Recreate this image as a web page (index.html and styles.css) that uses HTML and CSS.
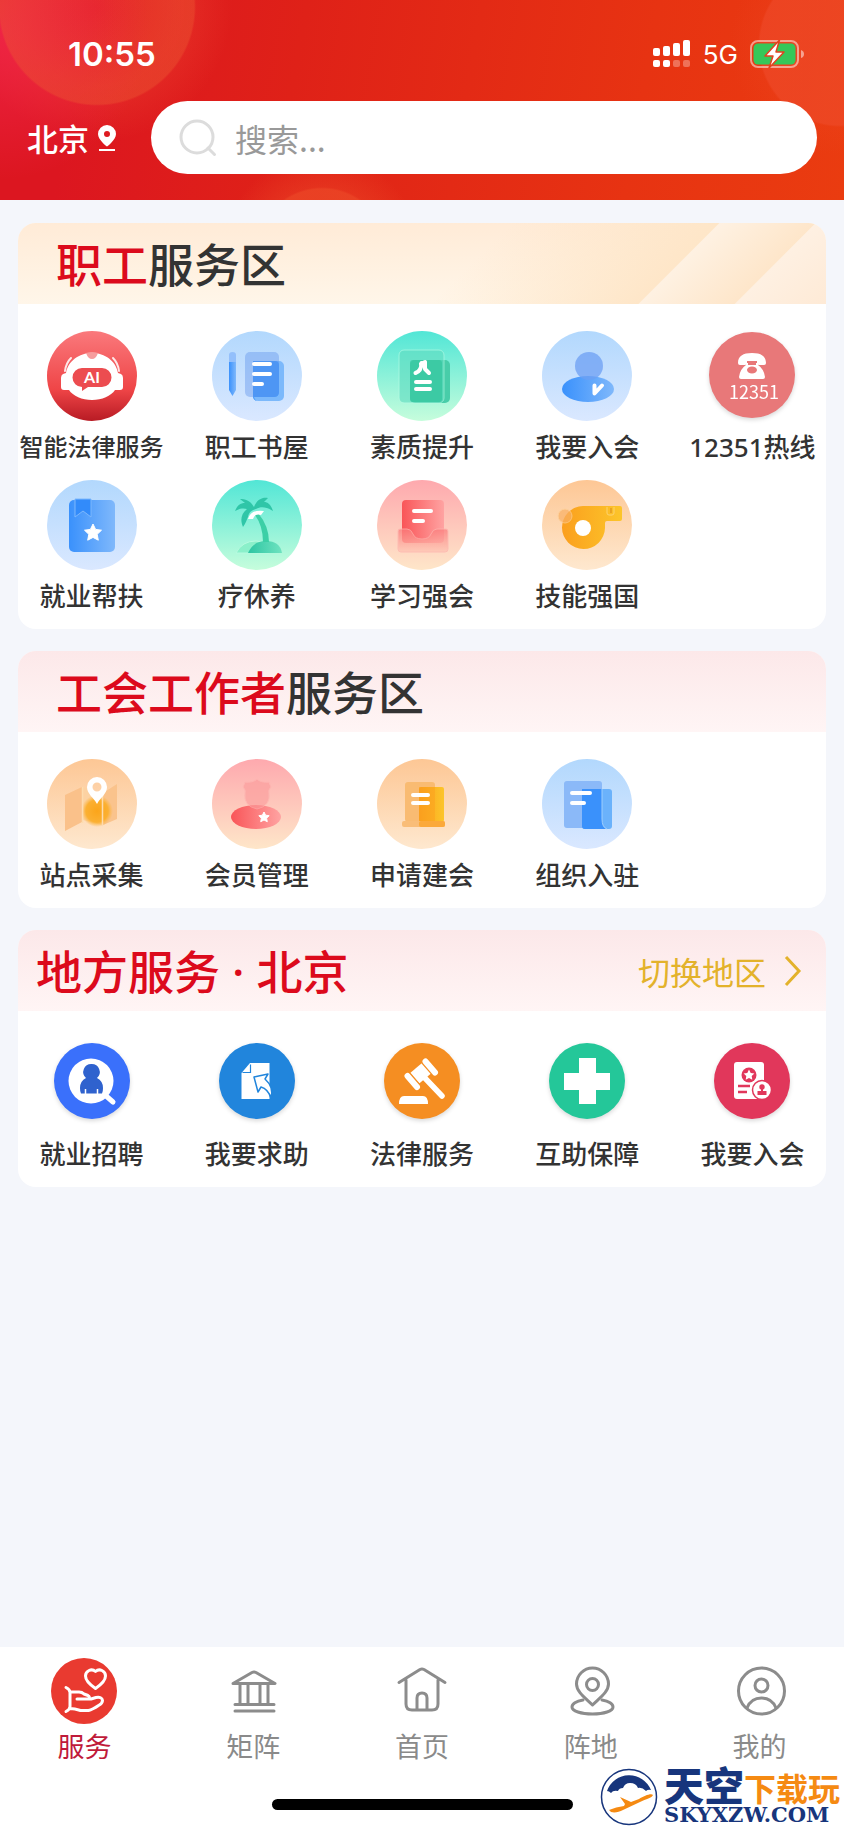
FILE: index.html
```
<!DOCTYPE html>
<html lang="zh-CN">
<head>
    <meta charset="UTF-8">
    <meta name="viewport" content="width=device-width, initial-scale=1.0">
    <title>服务</title>
    <link rel="stylesheet" href="styles.css">
</head>
<body>
    <!-- Shared gradients for the icons -->
    <svg class="defs" aria-hidden="true">
        <defs>
            <linearGradient id="bgBlue" x1="0" y1="0" x2="0" y2="1"><stop offset="0" stop-color="#b2d8fd"/><stop offset="1" stop-color="#dae8ff"/></linearGradient>
            <linearGradient id="bgGreen" x1="0" y1="0" x2="0" y2="1"><stop offset="0" stop-color="#52e6d6"/><stop offset="1" stop-color="#c6fddc"/></linearGradient>
            <linearGradient id="bgPink" x1="0" y1="0" x2="0" y2="1"><stop offset="0" stop-color="#fea9ae"/><stop offset="1" stop-color="#fee6c9"/></linearGradient>
            <linearGradient id="bgOrange" x1="0" y1="0" x2="0" y2="1"><stop offset="0" stop-color="#fdc795"/><stop offset="1" stop-color="#fee8cf"/></linearGradient>
            <linearGradient id="bgRed" x1="0" y1="0" x2="0" y2="1"><stop offset="0" stop-color="#fa797c"/><stop offset=".65" stop-color="#ef4547"/><stop offset="1" stop-color="#b81b24"/></linearGradient>
            <linearGradient id="blue"><stop offset="0" stop-color="#3a91fc"/><stop offset="1" stop-color="#7fb8fb"/></linearGradient>
            <linearGradient id="green"><stop offset="0" stop-color="#2cc5a2"/><stop offset="1" stop-color="#6fe3c0"/></linearGradient>
            <linearGradient id="red"><stop offset="0" stop-color="#f95558"/><stop offset="1" stop-color="#ffa3a2"/></linearGradient>
            <linearGradient id="orange"><stop offset="0" stop-color="#fb9f1e"/><stop offset="1" stop-color="#fcc52a"/></linearGradient>
            <linearGradient id="tray" x1="0" y1="0" x2="0" y2="1"><stop offset="0" stop-color="#fb7c7c"/><stop offset="1" stop-color="#fec5b4"/></linearGradient>
            <radialGradient id="glow"><stop offset="0" stop-color="#fba51a"/><stop offset=".7" stop-color="#fbb032"/><stop offset="1" stop-color="#fbb84a" stop-opacity="0"/></radialGradient>
        </defs>
    </svg>

    <header class="header">
        <div class="status-bar">
            <span class="time">10:55</span>
            <div class="status-icons">
                <svg class="signal" viewBox="0 0 38 28" fill="#fff">
                    <rect x="0" y="8" width="7" height="8" rx="2"/><rect x="10" y="6" width="7" height="10" rx="2"/><rect x="20" y="3" width="7" height="13" rx="2"/><rect x="30" y="0" width="7" height="16" rx="2"/>
                    <rect x="0" y="20" width="7" height="7" rx="2"/><rect x="10" y="20" width="7" height="7" rx="2"/><rect x="20" y="20" width="7" height="7" rx="2" opacity=".3"/><rect x="30" y="20" width="7" height="7" rx="2" opacity=".3"/>
                </svg>
                <span class="network">5G</span>
                <svg class="battery" viewBox="0 0 54 28">
                    <rect x="1" y="1" width="47" height="26" rx="7" fill="none" stroke="#fff" stroke-opacity=".5" stroke-width="2"/>
                    <path d="M51 10q3 1 3 4t-3 4z" fill="#fff" opacity=".5"/>
                    <rect x="3.500" y="3.500" width="42" height="21" rx="4.500" fill="#35c759"/>
                    <path d="M29.500 0L15 16H23L19 28L34 12H26z" fill="#fff" stroke="#e3421f" stroke-width="1.500" stroke-linejoin="round"/>
                </svg>
            </div>
        </div>
        <div class="search-row">
            <button type="button" class="city">北京
                <svg class="city-pin" viewBox="0 0 20 28" fill="#fff"><path fill-rule="evenodd" d="M10 1a9 9 0 0 1 9 9c0 6-9 12.500-9 12.500S1 16 1 10a9 9 0 0 1 9-9zm0 6a3 3 0 1 0 0 6 3 3 0 0 0 0-6z"/><rect x="2" y="25" width="16" height="2"/></svg>
            </button>
            <label class="search-box">
                <svg class="search-icon" viewBox="0 0 38 38" fill="none" stroke="#dcdcdc" stroke-width="3" stroke-linecap="round"><circle cx="18" cy="18" r="16"/><path d="M29 29l6.500 6.500"/></svg>
                <input type="search" class="search-input" placeholder="搜索..." aria-label="搜索">
            </label>
        </div>
    </header>

    <main class="content">
        <section class="card">
            <div class="card-header warm">
                <h2><em>职工</em>服务区</h2>
            </div>
            <div class="grid">
                <a class="item" href="#">
                    <svg class="icon" viewBox="0 0 90 90">
                        <circle cx="45" cy="45" r="45" fill="url(#bgRed)"/>
                        <path d="M19 42C21 30 32 22 45 22s24 8 26 20l3 1q2 1 2 4v9q0 3-3 3h-5c-4 6-13 10-23 10s-19-4-23-10h-5q-3 0-3-3v-9q0-3 2-4z" fill="#fff"/>
                        <path d="M24 27q-5 5-6 13M66 27q5 5 6 13" fill="none" stroke="#fff" stroke-width="2" stroke-linecap="round" opacity=".85"/>
                        <path d="M39 22q6-2 12 0q-2 6-6 6t-6-6z" fill="#f69c9d"/>
                        <path d="M35 37h20a9.500 9.500 0 0 1 0 19H41l-6 4v-4a9.500 9.500 0 0 1 0-19z" fill="#ec4c50"/>
                        <text x="45" y="52" text-anchor="middle" class="ai-text">AI</text>
                    </svg>
                    <span class="label small">智能法律服务</span>
                </a>
                <a class="item" href="#">
                    <svg class="icon" viewBox="0 0 90 90">
                        <circle cx="45" cy="45" r="45" fill="url(#bgBlue)"/>
                        <path d="M17 31v-7q0-3 3.500-3t3.500 3v7z" fill="#93bffb"/>
                        <path d="M17 31h7v28l-3.500 6-3.500-6z" fill="url(#blue)"/>
                        <rect x="41" y="30" width="31" height="40" rx="5" fill="#7cb9fb"/>
                        <path d="M41 30h22q4 0 4 4v27q0 5-5 5H42q1 4 4 4-5 0-5-5z" fill="#459afb"/>
                        <rect x="33" y="21" width="34" height="45" rx="5" fill="#5c92ea" opacity=".4"/>
                        <path d="M42 33h16M42 43h16M42 53h8" stroke="#fff" stroke-width="4" stroke-linecap="round"/>
                    </svg>
                    <span class="label">职工书屋</span>
                </a>
                <a class="item" href="#">
                    <svg class="icon" viewBox="0 0 90 90">
                        <circle cx="45" cy="45" r="45" fill="url(#bgGreen)"/>
                        <rect x="33" y="29" width="40" height="43" rx="5" fill="#48cda9"/>
                        <rect x="22" y="19" width="45" height="53" rx="5" fill="#5fdcc0" opacity=".6" stroke="#b7fbe4" stroke-width="1"/>
                        <rect x="33" y="29" width="32" height="42" rx="3" fill="#2fc39b" opacity=".65"/>
                        <path d="M38.500 42q6-2 6-10" fill="none" stroke="#fff" stroke-width="4" stroke-linecap="round"/>
                        <path d="M44 33l4-2v7l4 4" fill="none" stroke="#fff" stroke-width="4" stroke-linecap="round" stroke-linejoin="round"/>
                        <path d="M39 51h14M39 58h14" stroke="#fff" stroke-width="4" stroke-linecap="round"/>
                    </svg>
                    <span class="label">素质提升</span>
                </a>
                <a class="item" href="#">
                    <svg class="icon" viewBox="0 0 90 90">
                        <circle cx="45" cy="45" r="45" fill="url(#bgBlue)"/>
                        <ellipse cx="46" cy="58" rx="26" ry="13" fill="url(#blue)"/>
                        <circle cx="47" cy="35" r="14" fill="#6c9ff3" opacity=".75"/>
                        <path d="M52.500 54.500v8l7.500-8" fill="none" stroke="#fff" stroke-width="4" stroke-linecap="round" stroke-linejoin="round"/>
                    </svg>
                    <span class="label">我要入会</span>
                </a>
                <a class="item" href="#">
                    <svg class="icon shadow" viewBox="0 0 90 90">
                        <circle cx="45" cy="44" r="43" fill="#e87879"/>
                        <path d="M31 32c0-7 5-10 14-10s14 3 14 10q0 2-2 2h-5q-2 0-2-2v-2H40v2q0 2-2 2h-5q-2 0-2-2z" fill="#fff"/>
                        <path fill-rule="evenodd" d="M41 32v2h8v-2h2v2q6 4 7 12 0 2-2 2H34q-2 0-2-2 1-8 7-12v-2zm4 3.500a5 3.500 0 1 0 0 7 5 3.500 0 0 0 0-7z" fill="#fff"/>
                        <text x="47" y="68" text-anchor="middle" class="tel-text">12351</text>
                    </svg>
                    <span class="label">12351热线</span>
                </a>
                <a class="item" href="#">
                    <svg class="icon" viewBox="0 0 90 90">
                        <circle cx="45" cy="45" r="45" fill="url(#bgBlue)"/>
                        <rect x="22" y="20" width="46" height="52" rx="5" fill="url(#blue)"/>
                        <path d="M28 19h16v18l-8-6-8 6z" fill="#328bfa" stroke="#7db8fd" stroke-width="1"/>
                        <path d="M46 44l2.600 5.400 5.900.8-4.300 4.100 1.100 5.900-5.300-2.800-5.300 2.800 1.100-5.900-4.300-4.100 5.900-.8z" fill="#fff" stroke="#fff" stroke-linejoin="round"/>
                    </svg>
                    <span class="label">就业帮扶</span>
                </a>
                <a class="item" href="#">
                    <svg class="icon" viewBox="0 0 90 90">
                        <circle cx="45" cy="45" r="45" fill="url(#bgGreen)"/>
                        <path d="M24 73q6-12 20-12 10 0 13 12z" fill="#8af0ca" stroke="#b7fbe0" stroke-width="1"/>
                        <path d="M36 73q5-12 18-12 14 0 16 12z" fill="url(#green)"/>
                        <path d="M43 35q8 11 8 27h6q0-16-11-29z" fill="#3ccfa6"/>
                        <path d="M36 39q3-10 16-8l-3 4q-6-2-8 4z" fill="#fff"/>
                        <path d="M42 27c-4-7-9-8-14-8l5 4c-5 0-8 3-10 8 5-3 9-3 12-2-6 5-7 11-4 18 3-4 4-8 5-10 1-5 4-7 8-8 5-3 11-2 17 2-2-6-5-9-9-9l4-4c-5-1-11 1-14 9z" fill="#2fc6a8"/>
                    </svg>
                    <span class="label">疗休养</span>
                </a>
                <a class="item" href="#">
                    <svg class="icon" viewBox="0 0 90 90">
                        <circle cx="45" cy="45" r="45" fill="url(#bgPink)"/>
                        <rect x="25" y="20" width="42" height="43" rx="4" fill="url(#red)"/>
                        <path d="M21 51q0-2 2-2h7q4 0 6 5t9 5 9-5 6-5h9q2 0 2 2v18q0 3-3 3H24q-3 0-3-3z" fill="url(#tray)" opacity=".75" stroke="#fdb3ad" stroke-width="1"/>
                        <path d="M37 31h17M37 41h9" stroke="#fff" stroke-width="4" stroke-linecap="round"/>
                    </svg>
                    <span class="label">学习强会</span>
                </a>
                <a class="item" href="#">
                    <svg class="icon" viewBox="0 0 90 90">
                        <circle cx="45" cy="45" r="45" fill="url(#bgOrange)"/>
                        <path d="M41 26h37q2 0 2 2v11q0 2-2 2H65q-2 0-2 2v5a21.500 21.500 0 1 1-22-22z" fill="url(#orange)"/>
                        <circle cx="23" cy="36" r="7" fill="#f9b064" opacity=".7" stroke="#fdcf97" stroke-width="1"/>
                        <path d="M65 27v6q0 2 2 2h3q2 0 2-2v-6" fill="none" stroke="#fdd36f" stroke-width="1"/>
                        <path d="M69 28v5" stroke="#e39a22" stroke-width="1.500"/>
                        <circle cx="41" cy="48" r="8" fill="#fff"/>
                    </svg>
                    <span class="label">技能强国</span>
                </a>
            </div>
        </section>

        <section class="card">
            <div class="card-header">
                <h2><em>工会工作者</em>服务区</h2>
            </div>
            <div class="grid">
                <a class="item" href="#">
                    <svg class="icon" viewBox="0 0 90 90">
                        <circle cx="45" cy="45" r="45" fill="url(#bgOrange)"/>
                        <path d="M18 36l17-8v35l-17 9z" fill="#fac18a"/>
                        <path d="M36 28l19 7v31l-19-5z" fill="#fcd2a2"/>
                        <path d="M56 34l14-9v35l-14 6z" fill="#fac38c"/>
                        <circle cx="50" cy="52" r="16" fill="url(#glow)"/>
                        <path d="M35.500 28v36M55.500 32v34" stroke="#fddcae" stroke-width="1.500"/>
                        <path fill-rule="evenodd" d="M50 18a10 10 0 0 1 10 10c0 7-7 11-10 17-3-6-10-10-10-17a10 10 0 0 1 10-10zm0 5.500a4.500 4.500 0 1 0 0 9 4.500 4.500 0 0 0 0-9z" fill="#fff"/>
                    </svg>
                    <span class="label">站点采集</span>
                </a>
                <a class="item" href="#">
                    <svg class="icon" viewBox="0 0 90 90">
                        <circle cx="45" cy="45" r="45" fill="url(#bgPink)"/>
                        <ellipse cx="44" cy="58" rx="25" ry="12" fill="url(#red)"/>
                        <path d="M45 20q4 4 12 3 1 3 2 5-3 3-2 6 2 13-12 16-14-3-12-16 1-3-2-6 1-2 2-5 8 1 12-3z" fill="#fb9a9a" opacity=".6" stroke="#fdb1ae" stroke-width="1"/>
                        <path d="M52 53l1.600 3.200 3.600.5-2.600 2.500.7 3.500-3.300-1.700-3.300 1.700.7-3.500-2.600-2.500 3.600-.5z" fill="#fff" stroke="#fff" stroke-linejoin="round"/>
                    </svg>
                    <span class="label">会员管理</span>
                </a>
                <a class="item" href="#">
                    <svg class="icon" viewBox="0 0 90 90">
                        <circle cx="45" cy="45" r="45" fill="url(#bgOrange)"/>
                        <rect x="28" y="23" width="30" height="40" rx="3" fill="#f9bb72"/>
                        <rect x="42" y="28" width="25" height="35" rx="2" fill="url(#orange)"/>
                        <path d="M42 28h16v34H42z" fill="#fb9f1e" opacity=".5"/>
                        <rect x="25" y="62" width="43" height="6" rx="2" fill="#f9bd78"/>
                        <rect x="42" y="62" width="26" height="6" rx="2" fill="#fba93a"/>
                        <path d="M36 36h15M36 44h15" stroke="#fff" stroke-width="4" stroke-linecap="round"/>
                    </svg>
                    <span class="label">申请建会</span>
                </a>
                <a class="item" href="#">
                    <svg class="icon" viewBox="0 0 90 90">
                        <circle cx="45" cy="45" r="45" fill="url(#bgBlue)"/>
                        <rect x="22" y="22" width="38" height="47" rx="3" fill="#8bb9f8"/>
                        <rect x="40" y="30" width="30" height="40" rx="3" fill="#6bb2fb"/>
                        <path d="M40 30h20v31q0 7 4 9H43q-3 0-3-3z" fill="#3a91fb"/>
                        <path d="M60 30v30q0 8 5 10" fill="none" stroke="#9dcdfd" stroke-width="1"/>
                        <path d="M30 34h18M30 44h12" stroke="#fff" stroke-width="4" stroke-linecap="round"/>
                    </svg>
                    <span class="label">组织入驻</span>
                </a>
            </div>
        </section>

        <section class="card">
            <div class="card-header local">
                <h2><em>地方服务 · 北京</em></h2>
                <a class="switch" href="#">切换地区
                    <svg class="chevron" viewBox="0 0 18 32" fill="none" stroke="#e3b22b" stroke-width="3"><path d="M2 2l13 14L2 30"/></svg>
                </a>
            </div>
            <div class="grid">
                <a class="item" href="#">
                    <svg class="icon shadow" viewBox="0 2 90 90">
                        <circle cx="45" cy="45" r="38" fill="#3a70fb"/>
                        <path d="M58 59l8 7" stroke="#fff" stroke-width="5" stroke-linecap="round"/>
                        <circle cx="44" cy="45" r="22.500" fill="#fff"/>
                        <path d="M44.500 28a8 8 0 0 1 5.500 14q6 3 6 10 0 4-1 5.500H34q-1-1.500-1-5.500 0-7 6-10a8 8 0 0 1 5.500-14z" fill="#2f62ce"/>
                        <path d="M38.500 53v5M50.500 53v5" stroke="#fff" stroke-width="1.500"/>
                    </svg>
                    <span class="label">就业招聘</span>
                </a>
                <a class="item" href="#">
                    <svg class="icon shadow" viewBox="0 2 90 90">
                        <circle cx="45" cy="45" r="38" fill="#2185dc"/>
                        <path d="M38 27h19.500v36h-28V37z" fill="#fff"/>
                        <path d="M30.500 36.500h8v-8" fill="none" stroke="#2185dc" stroke-width="1.200"/>
                        <path d="M42 41l14-3-3 5q9 8 6 19-3-9-10-11l-3 5z" fill="#fff" stroke="#2185dc" stroke-width="1.500" stroke-linejoin="round"/>
                    </svg>
                    <span class="label">我要求助</span>
                </a>
                <a class="item" href="#">
                    <svg class="icon shadow" viewBox="0 2 90 90">
                        <circle cx="45" cy="45" r="38" fill="#f58e22"/>
                        <path d="M22 68q0-8 5-8h19q5 0 5 8z" fill="#fff"/>
                        <path d="M46 40l19 20" stroke="#fff" stroke-width="5.500" stroke-linecap="round"/>
                        <path d="M38 42l13-11" stroke="#fff" stroke-width="14"/>
                        <path d="M30.500 40l10 11.500M48 25.500l10 11.500" stroke="#f58e22" stroke-width="8" stroke-linecap="round"/>
                        <path d="M30.500 40l9.500 11M48.500 25.500l9.500 11" stroke="#fff" stroke-width="6" stroke-linecap="round"/>
                    </svg>
                    <span class="label">法律服务</span>
                </a>
                <a class="item" href="#">
                    <svg class="icon shadow" viewBox="0 2 90 90">
                        <circle cx="45" cy="45" r="38" fill="#24c799"/>
                        <path d="M37 22h17v15h14v17H54v14H37V54H22V37h15z" fill="#fff"/>
                    </svg>
                    <span class="label">互助保障</span>
                </a>
                <a class="item" href="#">
                    <svg class="icon shadow" viewBox="0 2 90 90">
                        <circle cx="45" cy="45" r="38" fill="#e1375b"/>
                        <rect x="27" y="26" width="30" height="37" rx="3" fill="#fff"/>
                        <circle cx="42" cy="39" r="7.500" fill="#e1375b"/>
                        <path d="M42 33.500l1.700 3.400 3.700.5-2.700 2.700.6 3.700-3.300-1.800-3.300 1.800.6-3.700-2.700-2.700 3.700-.5z" fill="#fff"/>
                        <path d="M31 50h12M31 56h9" stroke="#e1375b" stroke-width="2.500"/>
                        <circle cx="55" cy="54" r="9.500" fill="#fff" stroke="#e1375b" stroke-width="1.500"/>
                        <circle cx="55" cy="51" r="2.700" fill="#e1375b"/>
                        <path d="M54 52h2v3h3.500v4h-9v-4H54z" fill="#e1375b"/>
                    </svg>
                    <span class="label">我要入会</span>
                </a>
            </div>
        </section>
    </main>

    <footer class="tab-bar">
        <nav class="tabs">
            <a class="tab active" href="#">
                <svg class="tab-icon" viewBox="0 0 66 66">
                    <circle cx="33" cy="33" r="33" fill="#e93a30"/>
                    <g fill="none" stroke="#fff" stroke-width="3" stroke-linecap="round" stroke-linejoin="round">
                        <path d="M44.500 30.500C38 26 34.500 22 34.500 18a6 6 0 0 1 10-4.500A6 6 0 0 1 54.500 18c0 4-3.500 8-10 12.500z"/>
                        <path d="M15 29.500q4 2 4 5v14q0 3-4 5M19 34h9q3 0 5 2l4 1.500q2 1 1 3.500M26 41h14l5-1.500q6-1 6.500 3 0 3-4 5-6 4-10 5h-8q-6-2-10.500-2"/>
                    </g>
                </svg>
                <span>服务</span>
            </a>
            <a class="tab" href="#">
                <svg class="tab-icon line" viewBox="0 0 66 66"><path d="M13 25.500l19-11q2-1 4 0l19 11zM20 26v20M28 26v20M40 26v20M48 26v20M15 46.500h39M15 53h39"/></svg>
                <span>矩阵</span>
            </a>
            <a class="tab" href="#">
                <svg class="tab-icon line" viewBox="0 0 66 66"><path d="M10 24.500L31 11.500q2-1 4 0L56 24.500M17 22v24q0 6 6 6h20q6 0 6-6V22M28 52V40q0-5 5-5t5 5v12"/></svg>
                <span>首页</span>
            </a>
            <a class="tab" href="#">
                <svg class="tab-icon line" viewBox="0 0 66 66"><path d="M34.500 47c-7-7-16-13-16-21a16 16 0 0 1 32 0c0 8-9 14-16 21z"/><circle cx="34.500" cy="26.500" r="6"/><path d="M25 42c-7 1-11 4-11 7 0 4 9 7 20.500 7S55 53 55 49c0-3-4-6-11-7"/></svg>
                <span>阵地</span>
            </a>
            <a class="tab" href="#">
                <svg class="tab-icon line" viewBox="0 0 66 66"><circle cx="34.500" cy="33" r="23"/><circle cx="34.500" cy="27.500" r="6.500"/><path d="M20 50q4-10 14.500-10T49 50"/></svg>
                <span>我的</span>
            </a>
        </nav>
        <div class="home-indicator"></div>
        <div class="watermark">
            <svg class="watermark-logo" viewBox="0 0 58 58">
                <circle cx="29" cy="29" r="27.500" fill="#fff" stroke="#17357c" stroke-width="1.500"/>
                <path d="M7 23a23.500 23.500 0 0 1 44-1q-3-1-5 1-4-4-8-3-2-5-8-5-5 0-7 5-4 0-5 3-5-1-7 2-2-2-4-2z" fill="#17357c"/>
                <path d="M9 42l2 2c4 1 8 0 12-2l17-8c6-3 12-4 13-7-2-2-9 1-14 4L31 34l-11-5 5 7-1 2q-8 1-15 4z" fill="#f58a12"/>
            </svg>
            <div class="watermark-text">
                <div class="watermark-name">天空<span>下载玩</span></div>
                <div class="watermark-url">SKYXZW.COM</div>
            </div>
        </div>
    </footer>
</body>
</html>
```

FILE: styles.css
```
* {
    box-sizing: border-box;
}

body {
    margin: 0;
    min-height: 100vh;
    display: flex;
    flex-direction: column;
    background: #f4f6fb;
    color: #333;
    font-family: 'Noto Sans CJK SC', sans-serif;
}

a {
    color: inherit;
    text-decoration: none;
}

svg {
    display: block;
    flex-shrink: 0;
}

.defs {
    position: absolute;
    width: 0;
    height: 0;
}

/* Header */
.header {
    height: 200px;
    background:
        radial-gradient(circle at 97px 7px, rgba(236, 90, 50, 0) 0, rgba(236, 90, 50, 0.4) 97px, transparent 99px),
        radial-gradient(circle at 0 30px, rgba(240, 36, 72, 0.9), transparent 150px),
        radial-gradient(circle at 97px 7px, rgba(240, 70, 50, 0.4) 80px, transparent 135px),
        radial-gradient(circle at 840px 45px, rgba(240, 80, 50, 0.5) 80px, rgba(240, 80, 50, 0.1) 82px, transparent 110px),
        radial-gradient(circle at 322px 254px, rgba(240, 84, 44, 0.6) 65px, rgba(240, 84, 44, 0.3) 67px, transparent 100px),
        linear-gradient(100deg, #dc1620 10%, #df2118 35%, #e73312 75%, #ea3c10);
}

.status-bar {
    height: 101px;
    padding: 7px 40px 0 68px;
    display: flex;
    align-items: center;
    justify-content: space-between;
    color: #fff;
    font-family: 'Inter', sans-serif;
}

.time {
    font-size: 33px;
    font-weight: 600;
}

.status-icons {
    display: flex;
    align-items: center;
    gap: 12px;
}

.signal {
    width: 38px;
    height: 28px;
}

.network {
    font-size: 26px;
}

.battery {
    width: 54px;
    height: 28px;
}

.search-row {
    display: flex;
    align-items: center;
    gap: 34px;
    padding: 0 27px;
}

.city {
    display: flex;
    align-items: center;
    gap: 8px;
    padding: 0;
    border: none;
    background: none;
    color: #fff;
    font-family: inherit;
    font-size: 31px;
    font-weight: 500;
    cursor: pointer;
}

.city-pin {
    width: 20px;
    height: 28px;
}

.search-box {
    flex: 1;
    display: flex;
    align-items: center;
    gap: 18px;
    height: 73px;
    padding: 0 28px;
    border-radius: 37px;
    background: #fff;
}

.search-icon {
    width: 38px;
    height: 38px;
}

.search-input {
    flex: 1;
    min-width: 0;
    padding: 0;
    border: none;
    outline: none;
    background: none;
    color: #333;
    font-family: inherit;
    font-size: 32px;
}

.search-input::placeholder {
    color: #999;
}

/* Cards */
.content {
    flex: 1;
    display: flex;
    flex-direction: column;
    gap: 22px;
    padding: 23px 18px;
}

.card {
    border-radius: 18px;
    background: #fff;
}

.card-header {
    height: 81px;
    padding: 0 24px 0 38px;
    display: flex;
    align-items: center;
    justify-content: space-between;
    border-radius: 18px 18px 0 0;
    background: linear-gradient(#fce8e9, #fff5f5);
}

.card-header.warm {
    background:
        linear-gradient(135deg, transparent 60px, #fee6c8 207px, #fef1e2 208px, #fee6ca 275px, #fef0e2 276px, #feead6) right / 400px 100% no-repeat,
        linear-gradient(#ffebd7, #fff6e9);
}

.card-header.local {
    padding-left: 18px;
}

h2 {
    margin: 0;
    font-family: 'Noto Sans', 'Noto Sans CJK SC', sans-serif;
    font-size: 46px;
    line-height: 60px;
    font-weight: 500;
}

h2 em {
    color: #dc0a1c;
    font-style: normal;
}

.switch {
    display: flex;
    align-items: center;
    gap: 18px;
    color: #e3b22b;
    font-size: 32px;
}

.chevron {
    width: 18px;
    height: 32px;
}

/* The columns run slightly past the card so the outer icons sit near its edge */
.grid {
    display: grid;
    grid-template-columns: repeat(5, 1fr);
    margin: 0 -9px;
    padding-top: 27px;
}

.item {
    display: flex;
    flex-direction: column;
    align-items: center;
    gap: 8px;
    padding-bottom: 15px;
}

.icon {
    width: 90px;
    height: 90px;
}

.icon.shadow {
    filter: drop-shadow(0 2px 2px rgba(0, 0, 0, 0.15));
}

.ai-text {
    font: 700 16px 'Lato', sans-serif;
    fill: #fff;
}

.tel-text {
    font-size: 18px;
    fill: #fff;
}

.label {
    font-family: 'Noto Sans', 'Noto Sans CJK SC', sans-serif;
    font-size: 26px;
    line-height: 36px;
    font-weight: 500;
    white-space: nowrap;
}

.label.small {
    font-size: 24px;
}

/* Bottom bar */
.tab-bar {
    position: relative;
    padding: 11px 0 17px;
    background: #fff;
}

.tabs {
    display: grid;
    grid-template-columns: repeat(5, 1fr);
}

.tab {
    display: flex;
    flex-direction: column;
    align-items: center;
    gap: 4px;
    color: #8a8a8a;
    font-size: 27px;
    line-height: 36px;
}

.tab.active {
    color: #c01a3a;
}

.tab-icon {
    width: 66px;
    height: 66px;
}

.tab-icon.line {
    fill: none;
    stroke: #8c8c8c;
    stroke-width: 3;
    stroke-linecap: round;
    stroke-linejoin: round;
}

.home-indicator {
    width: 301px;
    height: 11px;
    margin: 35px auto 0;
    border-radius: 6px;
    background: #000;
}

.watermark {
    position: absolute;
    right: 4px;
    bottom: 1px;
    display: flex;
    align-items: center;
    gap: 6px;
}

.watermark-logo {
    width: 58px;
    height: 58px;
}

.watermark-name {
    color: #17357c;
    font-size: 40px;
    line-height: 34px;
    font-weight: 900;
}

.watermark-name span {
    color: #f58a12;
    font-size: 32px;
    font-weight: 700;
}

.watermark-url {
    color: #17357c;
    font-family: 'DejaVu Serif', serif;
    font-size: 21px;
    line-height: 22px;
    font-weight: 700;
}
```
